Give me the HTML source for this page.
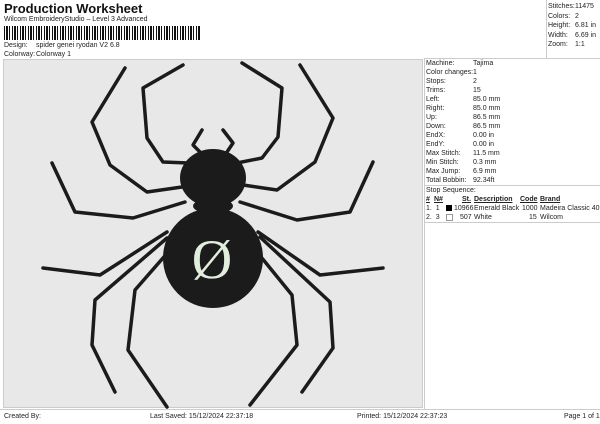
<!DOCTYPE html>
<html><head><style>
body{margin:0;width:600px;height:424px;background:#fff;font-family:"Liberation Sans",sans-serif;color:#222;position:relative;overflow:hidden}
.a{position:absolute;white-space:nowrap;font-size:7px;line-height:9px}
.r{position:absolute;left:426px;width:170px;font-size:7px;line-height:9px;white-space:nowrap}
.r div,.s div{position:relative;height:9px}
.r b{font-weight:normal;position:absolute;left:47px;top:0}
.s div{height:9.5px}
.s b{font-weight:normal;position:absolute;left:27px;top:0}
</style></head><body>
<div class="a" style="left:4px;top:1px;font-size:13px;line-height:15px;font-weight:bold;color:#111">Production Worksheet</div>
<div class="a" style="left:4px;top:15px">Wilcom EmbroideryStudio – Level 3 Advanced</div>
<div style="position:absolute;left:4px;top:26px;width:197px;height:14px;background:repeating-linear-gradient(90deg,#111 0 1px,#fff 1px 2px,#111 2px 4px,#fff 4px 5px,#111 5px 6px,#fff 6px 8px)"></div>
<div class="a" style="left:4px;top:41px">Design:</div><div class="a" style="left:36px;top:41px">spider genei ryodan V2 6.8</div>
<div class="a" style="left:4px;top:50px">Colorway:</div><div class="a" style="left:36px;top:50px">Colorway 1</div>
<div style="position:absolute;left:546px;top:0;width:1px;height:59px;background:#ccc"></div>
<div style="position:absolute;left:424px;top:58px;width:176px;height:1px;background:#ccc"></div>
<div class="a s" style="left:548px;top:2px;width:52px">
<div>Stitches:<b>11475</b></div><div>Colors:<b>2</b></div><div>Height:<b>6.81 in</b></div><div>Width:<b>6.69 in</b></div><div>Zoom:<b>1:1</b></div></div>
<div style="position:absolute;left:3px;top:59px;width:420px;height:349px;background:#e8e8e8;border:1px solid #ccc;box-sizing:border-box"></div>
<div style="position:absolute;left:424px;top:59px;width:1px;height:350px;background:#ccc"></div>
<div class="r" style="top:59px">
<div>Machine:<b>Tajima</b></div><div>Color changes:<b>1</b></div><div>Stops:<b>2</b></div><div>Trims:<b>15</b></div><div>Left:<b>85.0 mm</b></div><div>Right:<b>85.0 mm</b></div><div>Up:<b>86.5 mm</b></div><div>Down:<b>86.5 mm</b></div><div>EndX:<b>0.00 in</b></div><div>EndY:<b>0.00 in</b></div><div>Max Stitch:<b>11.5 mm</b></div><div>Min Stitch:<b>0.3 mm</b></div><div>Max Jump:<b>6.9 mm</b></div><div>Total Bobbin:<b>92.34ft</b></div></div>
<div style="position:absolute;left:424px;top:185px;width:176px;height:1px;background:#ccc"></div>
<div class="a" style="left:426px;top:186px">Stop Sequence:</div>
<div class="a" style="left:426px;top:195px;font-weight:bold;text-decoration:underline">#</div>
<div class="a" style="left:434px;top:195px;font-weight:bold;text-decoration:underline">N#</div>
<div class="a" style="left:462px;top:195px;font-weight:bold;text-decoration:underline">St.</div>
<div class="a" style="left:474px;top:195px;font-weight:bold;text-decoration:underline">Description</div>
<div class="a" style="left:520px;top:195px;font-weight:bold;text-decoration:underline">Code</div>
<div class="a" style="left:540px;top:195px;font-weight:bold;text-decoration:underline">Brand</div>
<div class="a" style="left:426px;top:204px">1.&nbsp; 1</div><div style="position:absolute;left:446px;top:205px;width:6px;height:6px;background:#000"></div>
<div class="a" style="left:454px;top:204px">10966</div><div class="a" style="left:474px;top:204px">Emerald Black</div><div class="a" style="left:522px;top:204px">1000</div><div class="a" style="left:540px;top:204px">Madeira Classic 40</div>
<div class="a" style="left:426px;top:213px">2.&nbsp; 3</div><div style="position:absolute;left:446px;top:214px;width:5px;height:5px;border:1px solid #999"></div>
<div class="a" style="left:460px;top:213px">507</div><div class="a" style="left:474px;top:213px">White</div><div class="a" style="left:529px;top:213px">15</div><div class="a" style="left:540px;top:213px">Wilcom</div>
<div style="position:absolute;left:424px;top:222px;width:176px;height:1px;background:#ccc"></div>
<div style="position:absolute;left:0;top:409px;width:600px;height:1px;background:#ccc"></div>
<div class="a" style="left:4px;top:412px">Created By:</div>
<div class="a" style="left:150px;top:412px">Last Saved: 15/12/2024 22:37:18</div>
<div class="a" style="left:357px;top:412px">Printed: 15/12/2024 22:37:23</div>
<div class="a" style="left:564px;top:412px">Page 1 of 1</div>
<svg style="position:absolute;left:0;top:0" width="600" height="424">
<g fill="none" stroke="#1b1b1b" stroke-width="3.5" stroke-linecap="round" stroke-linejoin="round">
<path d="M188 163 L163 162 L147 138 L143 88 L183 65"/>
<path d="M182 187 L147 192 L110 165 L92 122 L125 68"/>
<path d="M185 202 L133 218 L75 212 L52 163"/>
<path d="M167 232 L100 275 L43 268"/>
<path d="M167 238 L95 300 L92 345 L115 392"/>
<path d="M170 250 L135 290 L128 350 L167 407"/>
<path d="M237 163 L262 158 L278 137 L282 88 L242 63"/>
<path d="M243 185 L277 190 L315 162 L333 118 L300 65"/>
<path d="M240 202 L297 220 L350 212 L373 162"/>
<path d="M258 232 L320 275 L383 268"/>
<path d="M260 237 L330 302 L333 348 L302 392"/>
<path d="M257 252 L292 295 L297 345 L250 405"/>
<path d="M202 130 L193 145 L200 152"/>
<path d="M223 130 L233 143 L227 152"/>
</g>
<ellipse cx="213" cy="178" rx="33" ry="29" fill="#1b1b1b"/>
<ellipse cx="213" cy="258" rx="50" ry="50" fill="#1b1b1b"/>
<ellipse cx="213" cy="206" rx="20" ry="8" fill="#1b1b1b"/>
<text x="212" y="278" text-anchor="middle" font-family="Liberation Serif" font-size="56" fill="#e2eedd">Ø</text>
</svg>
</body></html>
